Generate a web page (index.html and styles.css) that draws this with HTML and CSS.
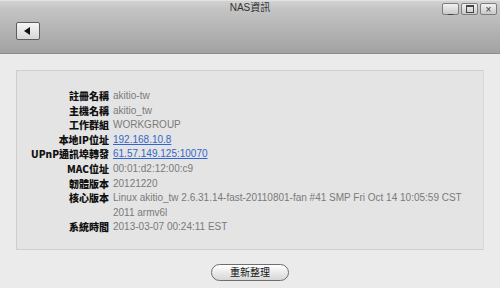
FILE: index.html
```html
<!DOCTYPE html>
<html lang="zh-Hant">
<head>
  <meta charset="UTF-8">
  <title>NAS資訊</title>
  <link rel="stylesheet" href="styles.css">
</head>
<body>

  <div class="header">
    <div class="titlebar">
      <span class="title">NAS資訊</span>
      <div class="win-btns">
        <span class="win-btn">_</span>
        <span class="win-btn"><span class="box"></span></span>
        <span class="win-btn">×</span>
      </div>
    </div>
    <button class="back-btn"><span class="arrow"></span></button>
  </div>

  <div class="panel">
    <div class="info">
      <span class="label">註冊名稱</span><span class="value">akitio-tw</span>
      <span class="label">主機名稱</span><span class="value">akitio_tw</span>
      <span class="label">工作群組</span><span class="value">WORKGROUP</span>
      <span class="label">本地IP位址</span><span class="value"><a href="#">192.168.10.8</a></span>
      <span class="label">UPnP通訊埠轉發</span><span class="value"><a href="#">61.57.149.125:10070</a></span>
      <span class="label">MAC位址</span><span class="value">00:01:d2:12:00:c9</span>
      <span class="label">韌體版本</span><span class="value">20121220</span>
      <span class="label">核心版本</span><span class="value">Linux akitio_tw 2.6.31.14-fast-20110801-fan #41 SMP Fri Oct 14 10:05:59 CST 2011 armv6l</span>
      <span class="label">系統時間</span><span class="value">2013-03-07 00:24:11 EST</span>
    </div>
  </div>

  <div class="actions">
    <button class="refresh-btn">重新整理</button>
  </div>

</body>
</html>
```

FILE: styles.css
```css
body {
  margin: 0;
  background-color: #ebebeb;
  font-family: "Liberation Sans", Arial, "Noto Sans CJK TC", sans-serif;
  font-size: 10px;
  color: #7a7a7a;
}

.header {
  height: 54px;
  box-sizing: border-box;
  background: linear-gradient(#d2d2d2, #c4c4c4 15%, #a2a2a2);
  border-top: 1px solid #e2e2e2;
  border-bottom: 1px solid #8e8e8e;
}

.titlebar {
  position: relative;
  height: 19px;
  text-align: center;
}

.title {
  display: inline-block;
  margin-top: 1px;
  font-size: 10px;
  color: #333;
  line-height: 12px;
}

.win-btns {
  position: absolute;
  top: 2px;
  right: 3px;
  display: flex;
  gap: 2px;
}

.win-btn {
  width: 15px;
  height: 10px;
  border: 1px solid #7d7d7d;
  border-radius: 2px;
  background: linear-gradient(#f2f2f2, #c9c9c9);
  font-size: 10px;
  line-height: 9px;
  color: #333;
  display: flex;
  justify-content: center;
  align-items: center;
}

.box {
  width: 6px;
  height: 5px;
  border: 1px solid #444;
  border-top-width: 2px;
}

.back-btn {
  display: flex;
  justify-content: center;
  align-items: center;
  margin-left: 16px;
  margin-top: 2px;
  width: 24px;
  height: 18px;
  padding: 0;
  border: 1px solid #5c5c5c;
  border-radius: 2px;
  background: linear-gradient(#f6f6f6, #d6d6d6);
}

.arrow {
  width: 0;
  height: 0;
  border-top: 4px solid transparent;
  border-bottom: 4px solid transparent;
  border-right: 6px solid #111;
  margin-left: -2px;
}

.panel {
  margin: 16px 16px 0;
  background-color: #e4e4e4;
  border: 1px solid #cfcfcf;
  border-right-color: #d8d8d8;
  padding: 18px 20px 14px 0;
}

.info {
  display: grid;
  grid-template-columns: 92px 1fr;
  column-gap: 4px;
  line-height: 14.6px;
}

.label {
  text-align: right;
  font-family: "Noto Sans CJK TC", sans-serif;
  font-weight: 900;
  color: #111;
  white-space: nowrap;
}

.value a {
  color: #3366cc;
}

.actions {
  display: flex;
  justify-content: center;
  margin-top: 14px;
}

.refresh-btn {
  width: 78px;
  height: 17px;
  padding: 0;
  border: 1px solid #6e6e6e;
  border-radius: 9px;
  background: linear-gradient(#ffffff, #e6e6e6 60%, #d6d6d6);
  font-family: "Noto Sans CJK TC", sans-serif;
  font-size: 10px;
  line-height: 14px;
  color: #111;
}
```
